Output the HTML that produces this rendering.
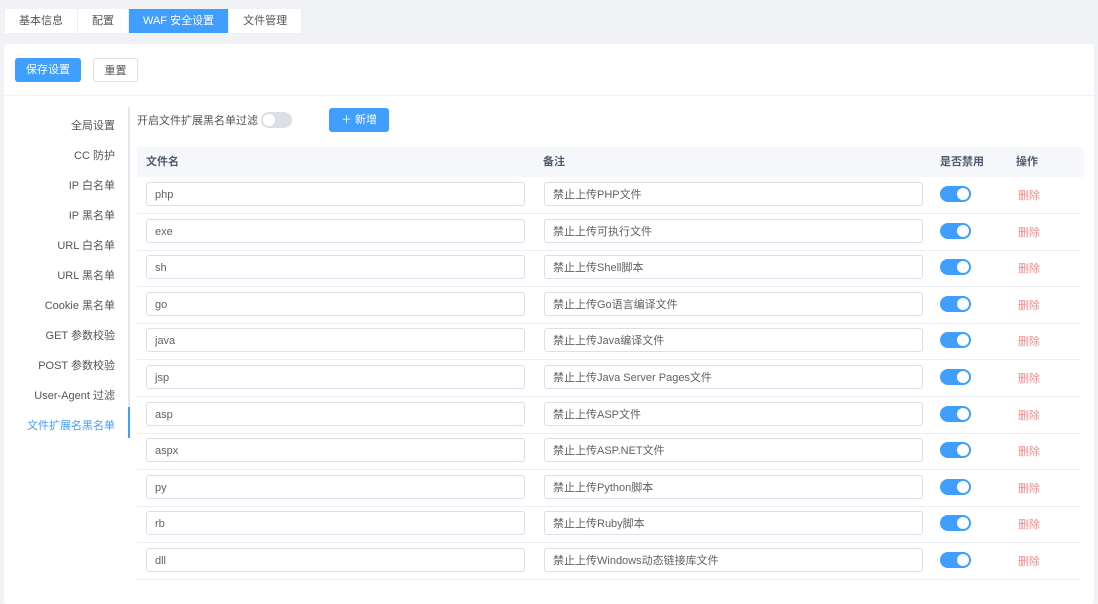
<!DOCTYPE html>
<html><head><meta charset="utf-8"><style>
*{box-sizing:border-box;margin:0;padding:0}
body{width:1098px;height:582px;overflow:hidden;background:#f0f2f5;font-family:"Liberation Sans","Noto Sans CJK SC",sans-serif;font-size:11px;color:#606266;position:relative}
.tabs{position:absolute;left:5px;top:9px;display:flex;height:24px}
.tab{background:#fff;padding:0 14px;line-height:24px;color:#555;border-right:1px solid #eee}
.tab.a{background:#409eff;color:#fff}
.card{position:absolute;left:4px;top:44px;width:1090px;height:560px;background:#fff;border-radius:3px}
.btn{position:absolute;height:24px;line-height:24px;border-radius:3px;text-align:center}
.menu{position:absolute;left:0;width:115px;text-align:right;color:#555}
.vline{position:absolute;left:128px;top:107px;width:2px;height:331px;background:#e4e7ed}
.sw{position:absolute;width:31px;height:16px;border-radius:8px;background:#409eff}
.sw::after{content:"";position:absolute;right:2px;top:2px;width:12px;height:12px;border-radius:50%;background:#fff}
.inp{position:absolute;height:24px;border:1px solid #dcdfe6;border-radius:3px;padding-left:8px;line-height:25px;color:#606266;background:#fff}
.row{position:absolute;left:137px;width:943px;height:1px;background:#ebeef5}
.del{position:absolute;left:1018px;color:#f78989}
</style></head><body>
<div class="tabs"><div class="tab">基本信息</div><div class="tab">配置</div><div class="tab a">WAF 安全设置</div><div class="tab">文件管理</div></div>
<div class="card"></div>
<div class="btn" style="left:15px;top:58px;width:66px;background:#409eff;color:#fff">保存设置</div>
<div class="btn" style="left:93px;top:58px;width:45px;border:1px solid #dcdfe6;color:#555">重置</div>
<div style="position:absolute;left:4px;top:95px;width:1090px;height:1px;background:#f2f3f5"></div>
<div class="menu" style="top:117px">全局设置</div>
<div class="menu" style="top:147px">CC 防护</div>
<div class="menu" style="top:177px">IP 白名单</div>
<div class="menu" style="top:207px">IP 黑名单</div>
<div class="menu" style="top:237px">URL 白名单</div>
<div class="menu" style="top:267px">URL 黑名单</div>
<div class="menu" style="top:297px">Cookie 黑名单</div>
<div class="menu" style="top:327px">GET 参数校验</div>
<div class="menu" style="top:357px">POST 参数校验</div>
<div class="menu" style="top:387px">User-Agent 过滤</div>
<div class="menu" style="top:417px;color:#409eff">文件扩展名黑名单</div>
<div class="vline"></div>
<div style="position:absolute;left:128px;top:407px;width:2px;height:31px;background:#409eff"></div>
<div style="position:absolute;left:137px;top:112px;color:#555">开启文件扩展黑名单过滤</div>
<div style="position:absolute;left:261px;top:112px;width:31px;height:16px;border-radius:8px;background:#dcdfe6"><div style="position:absolute;left:2px;top:2px;width:12px;height:12px;border-radius:50%;background:#fff"></div></div>
<div class="btn" style="left:329px;top:108px;width:60px;height:24px;background:#409eff;color:#fff">＋ 新增</div>
<div style="position:absolute;left:137px;top:147px;width:947px;height:30px;background:#f5f7fa;font-weight:bold;color:#515a6e;line-height:30px">
<span style="position:absolute;left:9px">文件名</span><span style="position:absolute;left:406px">备注</span><span style="position:absolute;left:803px">是否禁用</span><span style="position:absolute;left:879px">操作</span></div>
<div id="rows"></div>
<script>
const d=[["php","禁止上传PHP文件"],["exe","禁止上传可执行文件"],["sh","禁止上传Shell脚本"],["go","禁止上传Go语言编译文件"],["java","禁止上传Java编译文件"],["jsp","禁止上传Java Server Pages文件"],["asp","禁止上传ASP文件"],["aspx","禁止上传ASP.NET文件"],["py","禁止上传Python脚本"],["rb","禁止上传Ruby脚本"],["dll","禁止上传Windows动态链接库文件"]];
let h="";d.forEach((r,i)=>{const y=182+i*36.6;
h+=`<div class="inp" style="left:146px;top:${y}px;width:379px">${r[0]}</div><div class="inp" style="left:544px;top:${y}px;width:379px">${r[1]}</div><div class="sw" style="left:940px;top:${y+4}px"></div><div class="del" style="top:${y+5}px">删除</div><div class="row" style="top:${y+31}px"></div>`});
document.getElementById("rows").innerHTML=h;
</script>
</body></html>
